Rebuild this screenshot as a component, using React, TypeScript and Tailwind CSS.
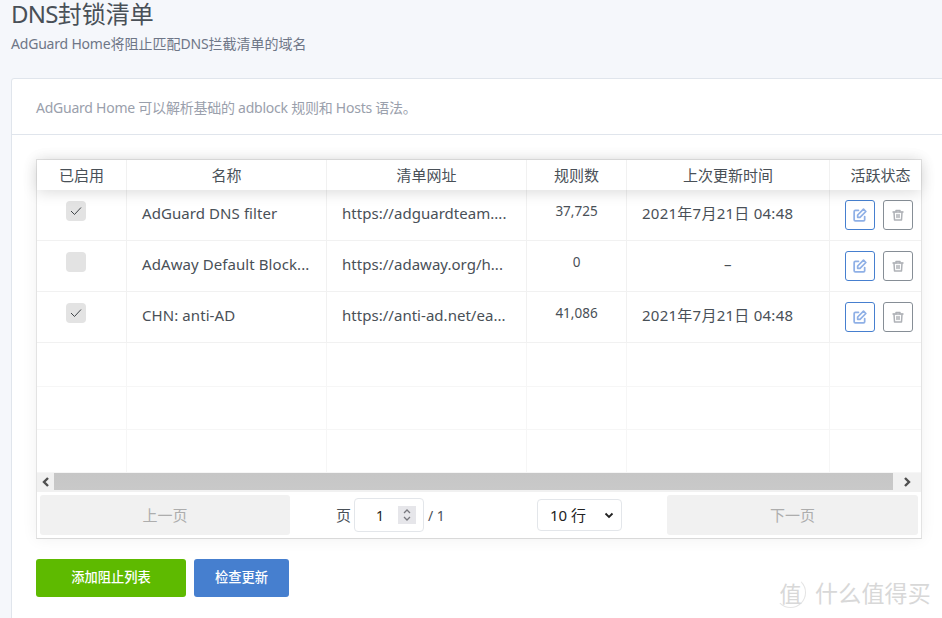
import React from "react";

const font = { fontFamily: '"Noto Sans","Noto Sans CJK SC",sans-serif' };
const cols = "grid grid-cols-[90px_200px_200px_100px_203px_91px] w-[884px]";
const cell = "border-r border-[#f1f1f1] flex items-center min-w-0";

function Edit() {
  return (
    <svg width="14" height="14" viewBox="0 0 24 24" fill="none" stroke="#8fb0e6" strokeWidth="3" strokeLinecap="round" strokeLinejoin="round">
      <path d="M20 14.66V20a2 2 0 0 1-2 2H4a2 2 0 0 1-2-2V6a2 2 0 0 1 2-2h5.34" />
      <polygon points="18 2 22 6 12 16 8 16 8 12 18 2" />
    </svg>
  );
}

function Trash() {
  return (
    <svg width="12" height="14" viewBox="0 0 24 24" fill="none" stroke="#aeb1b6" strokeWidth="3" strokeLinecap="round" strokeLinejoin="round">
      <path d="M2 6h20" />
      <path d="M8 6V3h8v3" />
      <path d="M4 6l1 16h14l1-16" />
      <path d="M10 11v6M14 11v6" />
    </svg>
  );
}

function Row({ on, name, url, rules, time }: { on: boolean; name: string; url: string; rules: string; time: string }) {
  const isDate = time.length > 1;
  return (
    <div className={`${cols} h-[51px] border-b border-[#f1f1f1] text-[15px] text-[#495057]`}>
      <div className={`${cell} justify-center pb-[8px] pr-[12px]`}>
        <div className="w-5 h-5 rounded-[4px] bg-[#e3e3e3] flex items-center justify-center">
          {on && (
            <svg width="12" height="10" viewBox="0 0 12 10" fill="none" stroke="#3f4448" strokeWidth="1">
              <path d="M1 5l3.5 3.5L11 1.5" />
            </svg>
          )}
        </div>
      </div>
      <div className={`${cell} pl-[15px] pb-[3px] whitespace-nowrap tracking-[0.08px]`}>{name}</div>
      <div className={`${cell} pl-[15px] pb-[3px] whitespace-nowrap tracking-[0.03px]`}>{url}</div>
      <div className={`${cell} justify-center pb-[7px] text-[13.5px]`}>{rules}</div>
      <div className={`${cell} pb-[3px] whitespace-nowrap tracking-[0.25px] ${isDate ? "pl-[15px]" : "justify-center"}`}>{time}</div>
      <div className="flex items-center gap-[8px] pl-[15px] pb-[1px]">
        <div className="w-[30px] h-[30px] border border-[#467fcf] rounded-[3px] flex items-center justify-center">
          <Edit />
        </div>
        <div className="w-[30px] h-[30px] border border-[#868e96] rounded-[3px] flex items-center justify-center">
          <Trash />
        </div>
      </div>
    </div>
  );
}

function Empty({ h }: { h: string }) {
  return (
    <div className={`${cols} ${h} border-b border-[#f6f6f6]`}>
      {[0, 1, 2, 3, 4].map((i) => (
        <div key={i} className="border-r border-[#f6f6f6]" />
      ))}
      <div />
    </div>
  );
}

export default function App() {
  return (
    <div style={font} className="relative w-[942px] h-[618px] overflow-hidden bg-[#f5f7fb]">
      <div className="pl-[11px] h-[78px]">
        <h1 className="text-[24px] leading-[28px] text-[#495057] font-normal">
          <span className="tracking-[-0.7px]">DNS</span>封锁清单
        </h1>
        <p className="mt-[6px] text-[14px] leading-[20px] text-[#6e7687]">
          <span className="tracking-[-0.2px]">AdGuard Home</span>将阻止匹配<span className="tracking-[-0.2px]">DNS</span>拦截清单的域名
        </p>
      </div>

      <div className="ml-[11px] w-[960px] h-[560px] bg-white border border-[#e0e5ec] rounded-[3px]">
        <div className="h-[56px] border-b border-[#e0e5ec] pl-[24px] pt-[1px] flex items-center text-[14px] text-[#9aa0ac]">
          <span className="tracking-[-0.24px] whitespace-pre">AdGuard Home 可以解析基础的 adblock 规则和 Hosts 语法。</span>
        </div>

        <div className="ml-[24px] mt-[24px] w-[886px] border border-[#e3e3e3] border-b-[#d9d9d9] shadow-[0_0_15px_rgba(0,0,0,0.06)]">
          <div className={`${cols} relative z-10 h-[30px] bg-white shadow-[0_2px_15px_rgba(0,0,0,0.15)] text-[15px] text-[#495057]`}>
            {["已启用", "名称", "清单网址", "规则数", "上次更新时间"].map((t) => (
              <div key={t} className="border-r border-[#f1f1f1] flex items-center justify-center">
                {t}
              </div>
            ))}
            <div className="flex items-center justify-center pl-[10px]">活跃状态</div>
          </div>

          <Row on name="AdGuard DNS filter" url="https://adguardteam...." rules="37,725" time="2021年7月21日 04:48" />
          <Row on={false} name="AdAway Default Block..." url="https://adaway.org/h..." rules="0" time="–" />
          <Row on name="CHN: anti-AD" url="https://anti-ad.net/ea..." rules="41,086" time="2021年7月21日 04:48" />
          <Empty h="h-[44px]" />
          <Empty h="h-[43px]" />
          <Empty h="h-[43px]" />

          <div className="flex h-[19px] bg-[#f1f1f1] items-start">
            <div className="w-[17px] h-[17px] flex items-center justify-center">
              <svg width="8" height="10" viewBox="0 0 8 10" fill="none" stroke="#505050" strokeWidth="2.4">
                <path d="M6 1L2 5l4 4" />
              </svg>
            </div>
            <div className="w-[839px] h-[17px] bg-gradient-to-b from-[#c6c6c6] to-[#c9c9c9]" />
            <div className="flex-1 h-[17px] flex items-center justify-center">
              <svg width="8" height="10" viewBox="0 0 8 10" fill="none" stroke="#505050" strokeWidth="2.4">
                <path d="M2 1l4 4-4 4" />
              </svg>
            </div>
          </div>

          <div className="h-[46px] p-[3px] flex items-stretch text-[15px]">
            <div className="w-[250px] rounded-[3px] bg-[#f1f1f1] text-[#adadad] flex items-center justify-center">上一页</div>
            <div className="w-[377px] flex items-center text-[#495057]">
              <div className="w-[247px] flex items-center pl-[46px]">
                <span>页</span>
                <div className="ml-[3px] w-[70px] h-[34px] border border-[#e3e6ea] rounded-[4px] bg-white flex items-center pl-[21px] text-[14px] text-[#222]">
                  <span className="w-[22px]">1</span>
                  <div className="w-[18px] h-[18px] bg-[#e6e6ea] flex flex-col items-center justify-center gap-[2px]">
                    <svg width="8" height="5" viewBox="0 0 8 5" fill="none" stroke="#77777d" strokeWidth="1.3">
                      <path d="M1 4l3-3 3 3" />
                    </svg>
                    <svg width="8" height="5" viewBox="0 0 8 5" fill="none" stroke="#77777d" strokeWidth="1.3">
                      <path d="M1 1l3 3 3-3" />
                    </svg>
                  </div>
                </div>
                <span className="ml-[4px] text-[14px]">/ 1</span>
              </div>
              <div className="w-[85px] h-[32px] border border-[#e3e6ea] rounded-[4px] bg-white flex items-center justify-between pl-[12px] pr-[7px] text-[#222] text-[15px]">
                <span>10 行</span>
                <svg width="10" height="7" viewBox="0 0 10 7" fill="none" stroke="#222" strokeWidth="1.8">
                  <path d="M1.5 1.5L5 5l3.5-3.5" />
                </svg>
              </div>
            </div>
            <div className="w-[251px] rounded-[3px] bg-[#f1f1f1] text-[#adadad] flex items-center justify-center">下一页</div>
          </div>
        </div>

        <div className="ml-[24px] mt-[20px] flex gap-[8px]">
          <div className="w-[150px] h-[38px] rounded-[3px] bg-[#5eba00] text-white text-[13.25px] font-medium flex items-center justify-center">添加阻止列表</div>
          <div className="w-[95px] h-[38px] rounded-[3px] bg-[#467fcf] text-white text-[13.25px] font-medium flex items-center justify-center">检查更新</div>
        </div>
      </div>

      <div className="absolute left-[775px] top-[577px] flex items-center gap-[9px] text-[#d8d8d8]">
        <div className="w-[31px] h-[31px] rounded-full border border-[#e4e4e4] border-l-transparent border-t-transparent flex items-center justify-center text-[22px] leading-none">值</div>
        <span className="text-[23px] leading-[30px] tracking-[0.2px]">什么值得买</span>
      </div>
    </div>
  );
}
